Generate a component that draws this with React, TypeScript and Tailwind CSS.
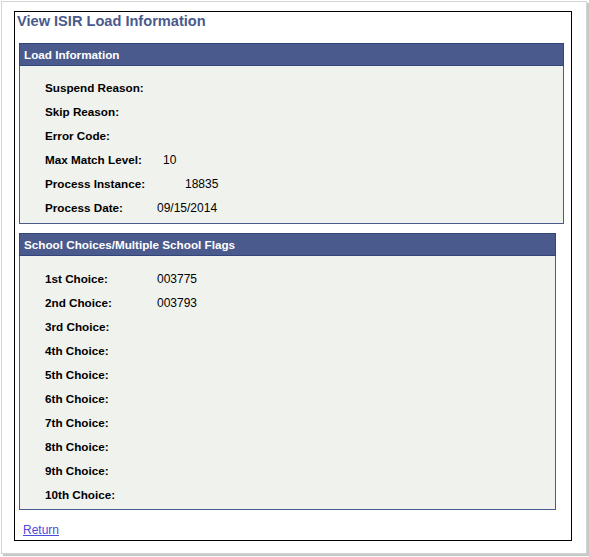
import React from "react";

type Field = {
  label: string;
  value?: string;
  pad?: string;
};

const loadFields: Field[] = [
  { label: "Suspend Reason:" },
  { label: "Skip Reason:" },
  { label: "Error Code:" },
  { label: "Max Match Level:", value: "10", pad: "pl-[6px]" },
  { label: "Process Instance:", value: "18835", pad: "pl-[28px]" },
  { label: "Process Date:", value: "09/15/2014" },
];

const schoolFields: Field[] = [
  { label: "1st Choice:", value: "003775" },
  { label: "2nd Choice:", value: "003793" },
  { label: "3rd Choice:" },
  { label: "4th Choice:" },
  { label: "5th Choice:" },
  { label: "6th Choice:" },
  { label: "7th Choice:" },
  { label: "8th Choice:" },
  { label: "9th Choice:" },
  { label: "10th Choice:" },
];

const FieldRow = ({ label, value, pad }: Field) => (
  <div className="flex h-[24px] items-center pl-[25px]">
    <span className="w-[112px] shrink-0 font-bold text-black">{label}</span>
    {value ? (
      <span className={`text-[12px] text-black ${pad ?? ""}`}>{value}</span>
    ) : null}
  </div>
);

const Panel = ({
  title,
  fields,
  width,
  spacing,
}: {
  title: string;
  fields: Field[];
  width: string;
  spacing: string;
}) => (
  <div className={`${width} flex flex-col`}>
    <div className="flex h-[23px] items-center border border-[#324579] bg-[#4a5a8c] px-[4px] font-bold text-white">
      {title}
    </div>
    <div className={`border border-t-0 border-[#4a5a8c] bg-[#f0f2ee] ${spacing}`}>
      {fields.map((f) => (
        <FieldRow key={f.label} {...f} />
      ))}
    </div>
  </div>
);

const App = () => {
  return (
    <div
      className="h-[557px] w-[589px] bg-white text-[11.7px] leading-none"
      style={{ fontFamily: '"Liberation Sans", Arial, sans-serif' }}
    >
      <div className="ml-[1px] mt-[1px] h-[553px] w-[586px] border border-[#d4d4d4] pl-[12px] pt-[9px] shadow-[2px_2px_1px_#c8c8c8]">
        <div className="flex h-[530px] w-[558px] flex-col border border-black">
          <h1 className="pl-[2px] pt-[1px] text-[14.6px] leading-[16px] font-bold text-[#4a5a8c]">
            View ISIR Load Information
          </h1>
          <div className="ml-[4px] mt-[14px]">
            <Panel
              title="Load Information"
              fields={loadFields}
              width="w-[545px]"
              spacing="pt-[10px] pb-[3px]"
            />
          </div>
          <div className="ml-[4px] mt-[9px]">
            <Panel
              title="School Choices/Multiple School Flags"
              fields={schoolFields}
              width="w-[537px]"
              spacing="pt-[11px] pb-[2px]"
            />
          </div>
          <div className="ml-[8px] mt-[14px]">
            <a href="#" className="text-[12px] text-[#4b4bdc] underline">
              Return
            </a>
          </div>
        </div>
      </div>
    </div>
  );
};

export default App;
